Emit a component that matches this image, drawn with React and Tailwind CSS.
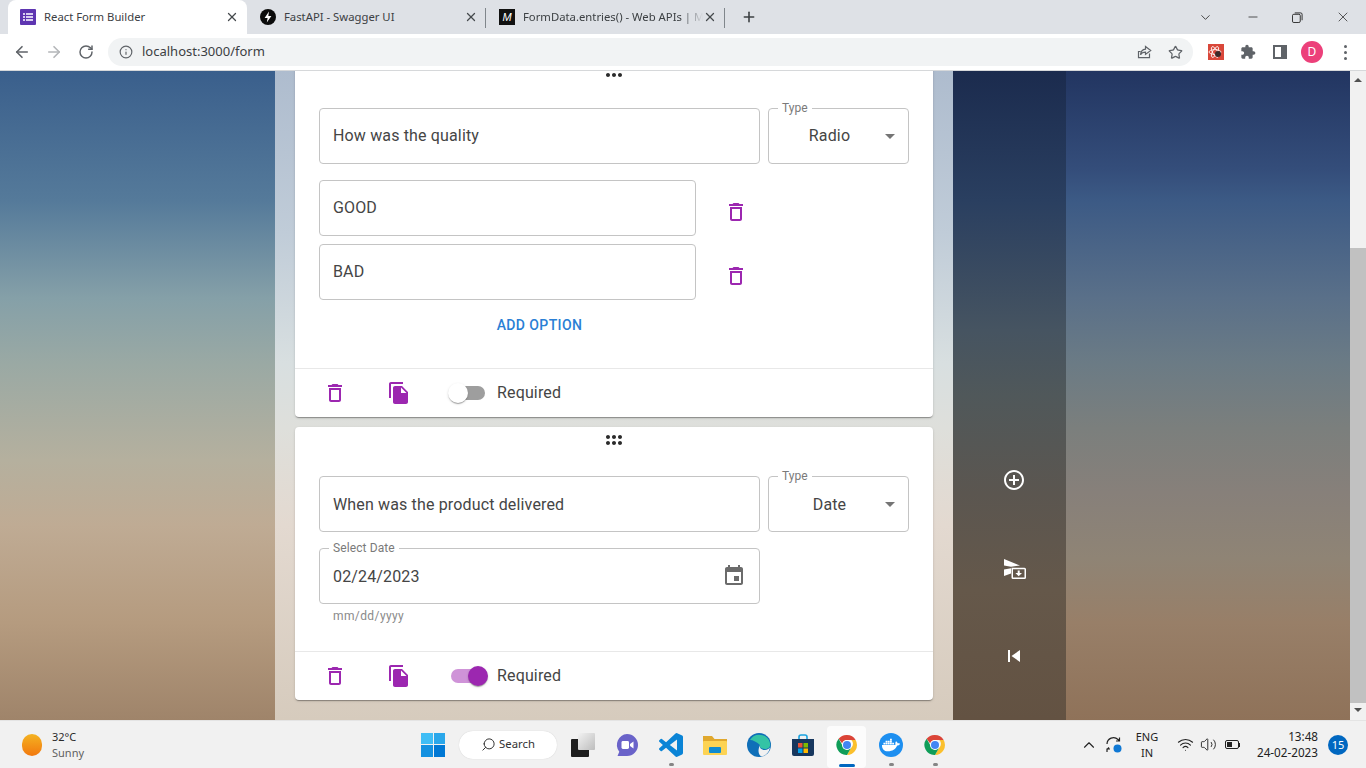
import React from 'react';
import { ArrowLeft, ArrowRight, RotateCw, Info, Star, Plus, X, ChevronDown, ChevronUp, Wifi, Volume2, Search, Minus } from 'lucide-react';
import { FaDocker } from 'react-icons/fa';

const trashPath = 'M6 19c0 1.1.9 2 2 2h8c1.1 0 2-.9 2-2V7H6v12zM8 9h8v10H8V9zm7.5-5l-1-1h-5l-1 1H5v2h14V4z';
const copyPath = 'M16 1H4c-1.1 0-2 .9-2 2v14h2V3h12V1zm-1 4l6 6v10c0 1.1-.9 2-2 2H7.99C6.89 23 6 22.1 6 21l.01-14c0-1.1.89-2 1.99-2h7zm-1 7h5.5L14 6.5V12z';
const dragPath = 'M11 18c0 1.1-.9 2-2 2s-2-.9-2-2 .9-2 2-2 2 .9 2 2zm-2-8c-1.1 0-2 .9-2 2s.9 2 2 2 2-.9 2-2-.9-2-2-2zm0-6c-1.1 0-2 .9-2 2s.9 2 2 2 2-.9 2-2-.9-2-2-2zm6 4c1.1 0 2-.9 2-2s-.9-2-2-2-2 .9-2 2 .9 2 2 2zm0 2c-1.1 0-2 .9-2 2s.9 2 2 2 2-.9 2-2-.9-2-2-2zm0 6c-1.1 0-2 .9-2 2s.9 2 2 2 2-.9 2-2-.9-2-2-2z';
const eventPath = 'M17 12h-5v5h5v-5zM16 1v2H8V1H6v2H5c-1.11 0-1.99.9-1.99 2L3 19c0 1.1.89 2 2 2h14c1.1 0 2-.9 2-2V5c0-1.1-.9-2-2-2h-1V1h-2zm3 18H5V8h14v11z';
const addCirclePath = 'M13 7h-2v4H7v2h4v4h2v-4h4v-2h-4V7zm-1-5C6.48 2 2 6.48 2 12s4.48 10 10 10 10-4.48 10-10S17.52 2 12 2zm0 18c-4.41 0-8-3.59-8-8s3.59-8 8-8 8 3.59 8 8-3.59 8-8 8z';
const skipPath = 'M6 6h2v12H6zm3.5 6l8.5 6V6z';
const puzzlePath = 'M20.5 11H19V7c0-1.1-.9-2-2-2h-4V3.5C13 2.12 11.88 1 10.5 1S8 2.12 8 3.5V5H4c-1.1 0-1.99.9-1.99 2v3.8H3.5c1.49 0 2.7 1.21 2.7 2.7s-1.21 2.7-2.7 2.7H2V20c0 1.1.9 2 2 2h3.8v-1.5c0-1.49 1.21-2.7 2.7-2.7 1.49 0 2.7 1.21 2.7 2.7V22H17c1.1 0 2-.9 2-2v-4h1.5c1.38 0 2.5-1.12 2.5-2.5S21.88 11 20.5 11z';
const vscodePath = 'M23.15 2.587L18.21.21a1.494 1.494 0 0 0-1.705.29l-9.46 8.63-4.12-3.128a.999.999 0 0 0-1.276.057L.327 7.261A1 1 0 0 0 .326 8.74L3.899 12 .326 15.26a1 1 0 0 0 .001 1.479L1.65 17.94a.999.999 0 0 0 1.276.057l4.12-3.128 9.46 8.63a1.492 1.492 0 0 0 1.704.29l4.942-2.377A1.5 1.5 0 0 0 24 20.06V3.939a1.5 1.5 0 0 0-.85-1.352zm-5.146 14.861L10.826 12l7.178-5.448v10.896z';

const Icon = ({ d, className }) => (
  <svg viewBox="0 0 24 24" fill="currentColor" className={className}><path d={d} /></svg>
);

const Tab = ({ icon, title, active, separator, fade }) => (
  <div className={`relative flex items-center h-[34px] w-[239px] pl-[12px] pr-[8px] ${active ? 'bg-white rounded-t-lg' : ''}`}>
    {icon}
    <span className={`ml-[8px] flex-1 overflow-hidden whitespace-nowrap text-[11.3px] text-[#3c4043] font-['Noto_Sans',sans-serif] ${fade ? '[mask-image:linear-gradient(90deg,#000_88%,transparent)]' : ''}`}>{title}</span>
    <X size={14} strokeWidth={2.2} className="shrink-0 text-[#45494d]" />
    {separator && <div className="absolute right-0 top-[8px] h-[20px] w-px bg-[#80868b]" />}
  </div>
);

const FormsFavicon = () => (
  <div className="w-4 h-4 shrink-0 rounded-[1px] bg-[#5e35b1] flex flex-col items-center justify-center gap-[1px]">
    {[0, 1, 2].map((row) => (
      <div key={row} className="flex gap-[1px]">
        <div className="w-[2px] h-[2px] bg-[#d9cff0]" />
        <div className="w-[7px] h-[2px] bg-[#d9cff0]" />
      </div>
    ))}
  </div>
);

const BrowserChrome = () => (
  <div className="shrink-0">
    <div className="flex items-center h-[34px] bg-[#dee1e6] pl-[8px]">
      <Tab active title="React Form Builder" icon={<FormsFavicon />} />
      <Tab
        separator
        title="FastAPI - Swagger UI"
        icon={
          <svg viewBox="0 0 16 16" className="ml-[1px] w-4 h-4 shrink-0">
            <circle cx="8" cy="8" r="8" fill="#0b0b0b" />
            <path d="M9 2.5 4.6 9h3l-.8 4.6L11.4 7H8.3z" fill="#fff" />
          </svg>
        }
      />
      <Tab
        separator
        fade
        title="FormData.entries() - Web APIs | MDN"
        icon={
          <div className="ml-[1px] w-4 h-4 shrink-0 bg-[#111] text-white text-[11px] italic leading-4 text-center font-['Liberation_Sans',sans-serif]">M</div>
        }
      />
      <Plus size={16} strokeWidth={2.4} className="ml-[16px] text-[#3c4043]" />
      <div className="flex-1" />
      <ChevronDown size={15} strokeWidth={1.3} className="text-[#222]" />
      <Minus size={14} strokeWidth={1.3} className="ml-[33px] text-[#222]" />
      <svg viewBox="0 0 12 12" className="ml-[32px] w-[11px] h-[11px] text-[#222]" fill="none" stroke="currentColor" strokeWidth="1">
        <rect x="0.5" y="2.5" width="8.5" height="9" rx="1.5" />
        <path d="M3 1h6.5A1.5 1.5 0 0 1 11 2.5V9" />
      </svg>
      <X size={16} strokeWidth={1.1} className="ml-[32px] mr-[15px] text-[#222]" />
    </div>
    <div className="flex items-center h-[36px] bg-white border-b border-[#d6d8da] box-content pl-[13px]">
      <ArrowLeft size={18} strokeWidth={2.2} className="text-[#5f6368]" />
      <ArrowRight size={18} strokeWidth={2.2} className="ml-[14px] text-[#b4b6b9]" />
      <RotateCw size={16} strokeWidth={2.2} className="ml-[15px] text-[#5f6368]" />
      <div className="ml-[14px] flex items-center w-[1085px] h-[28px] rounded-full bg-[#f1f3f4] pl-[11px]">
        <Info size={14} strokeWidth={2} className="text-[#5f6368]" />
        <span className="ml-[9px] text-[13px] text-[#3c4043] font-['Noto_Sans',sans-serif]">localhost:3000/form</span>
        <div className="flex-1" />
        <svg viewBox="0 0 16 16" className="w-4 h-4 text-[#5f6368]" fill="none" stroke="currentColor" strokeWidth="1.2">
          <path d="M13.5 9.5v4.2h-11V7.5h2.2" />
          <path d="M9.5 2.5 14.7 6.6 9.5 10.4V8.2c-2.4 0-4 .8-5 2.6.3-3.2 2-5.4 5-5.7z" />
        </svg>
        <Star size={15} strokeWidth={2} className="ml-[16px] mr-[10px] text-[#5f6368]" />
      </div>
      <svg viewBox="0 0 16 16" className="ml-[15px] w-4 h-4">
        <rect width="16" height="16" fill="#d9473a" />
        <g fill="none" stroke="#fff" strokeWidth=".8">
          <ellipse cx="7" cy="8" rx="6" ry="2.4" />
          <ellipse cx="7" cy="8" rx="6" ry="2.4" transform="rotate(60 7 8)" />
          <ellipse cx="7" cy="8" rx="6" ry="2.4" transform="rotate(120 7 8)" />
        </g>
        <circle cx="10" cy="10" r="3" fill="#3a2a2a" />
      </svg>
      <Icon d={puzzlePath} className="ml-[16px] w-4 h-4 text-[#5f6368]" />
      <div className="ml-[17px] w-[14px] h-[14px] border-[2px] border-r-[6px] border-[#5f6368]" />
      <div className="ml-[14px] w-[22px] h-[22px] rounded-full bg-[#ec407a] text-white text-[12px] leading-[22px] text-center font-['Noto_Sans',sans-serif]">D</div>
      <div className="ml-[21px] flex flex-col gap-[3px]">
        <div className="w-[3px] h-[3px] rounded-full bg-[#5f6368]" />
        <div className="w-[3px] h-[3px] rounded-full bg-[#5f6368]" />
        <div className="w-[3px] h-[3px] rounded-full bg-[#5f6368]" />
      </div>
    </div>
  </div>
);

const TextField = ({ value, label, width, nudge, children }) => (
  <div className={`relative flex items-center h-[56px] ${width} shrink-0 border border-[#c4c4c4] rounded px-[13px]`}>
    {label && <span className="absolute -top-[8px] left-[9px] bg-white px-[4px] text-[12px] leading-[14px] tracking-[0.1px] text-[#7a7a7a]">{label}</span>}
    <span className={`flex-1 text-[16px] tracking-[0.15px] text-[#454545] ${nudge ? 'pt-[2px]' : ''}`}>{value}</span>
    {children}
  </div>
);

const TypeSelect = ({ value, nudge }) => (
  <div className="relative flex items-center h-[56px] w-[141px] shrink-0 border border-[#c4c4c4] rounded">
    <span className="absolute -top-[8px] left-[9px] bg-white px-[4px] text-[12px] leading-[14px] text-[#7a7a7a]">Type</span>
    <span className={`flex-1 pl-[5px] text-center text-[16px] tracking-[0.15px] text-[#454545] ${nudge ? 'pt-[2px]' : ''}`}>{value}</span>
    <div className="mr-[13px] w-0 h-0 border-x-[5px] border-x-transparent border-t-[5px] border-t-[#757575]" />
  </div>
);

const Toggle = ({ on }) => (
  <div className={`relative w-[34px] h-[14px] rounded-full ${on ? 'bg-[#cf93d8]' : 'bg-[#9e9e9e]'}`}>
    <div className={`absolute -top-[3px] w-[20px] h-[20px] rounded-full shadow-[0_2px_1px_-1px_rgba(0,0,0,.2),0_1px_1px_0_rgba(0,0,0,.14),0_1px_3px_0_rgba(0,0,0,.12)] ${on ? 'left-[17px] bg-[#9c27b0]' : '-left-[3px] bg-white'}`} />
  </div>
);

const Card = ({ on, children }) => (
  <div className="shrink-0 bg-white rounded shadow-[0_2px_1px_-1px_rgba(0,0,0,.2),0_1px_1px_0_rgba(0,0,0,.14),0_1px_3px_0_rgba(0,0,0,.12)]">
    <div className="flex justify-center pt-[1px] h-[25px]">
      <Icon d={dragPath} className="w-6 h-6 rotate-90 text-[#2b2b2b]" />
    </div>
    <div className="px-[24px] pt-[24px]">{children}</div>
    <div className="flex items-center h-[49px] border-t border-[#e8e8e8] pl-[28px]">
      <Icon d={trashPath} className="w-6 h-6 text-[#9c27b0]" />
      <Icon d={copyPath} className="ml-[40px] w-6 h-6 text-[#9c27b0]" />
      <div className="ml-[40px]"><Toggle on={on} /></div>
      <span className="ml-[12px] text-[16px] tracking-[0.15px] text-[#454545]">Required</span>
    </div>
  </div>
);

const OptionRow = ({ value }) => (
  <div className="flex items-center">
    <TextField value={value} width="w-[377px]" />
    <Icon d={trashPath} className="ml-[28px] mt-[8px] w-6 h-6 text-[#9c27b0]" />
  </div>
);

const FormColumn = () => (
  <div className="w-[678px] shrink-0 flex flex-col justify-end gap-[10px] overflow-hidden px-[20px] pb-[20px] font-['Roboto',sans-serif] bg-[linear-gradient(180deg,#aebcce_0%,#c0ccd8_25%,#d8dfe0_45%,#dedfdb_55%,#e3d9d0_70%,#d6cbbd_100%)]">
    <Card on={false}>
      <div className="flex gap-[8px]">
        <TextField value="How was the quality" width="w-[441px]" />
        <TypeSelect value="Radio" />
      </div>
      <div className="mt-[16px] flex flex-col gap-[8px]">
        <OptionRow value="GOOD" />
        <OptionRow value="BAD" />
      </div>
      <div className="w-[441px] h-[68px] pt-[7px]">
        <div className="h-[36px] flex items-center justify-center text-[14px] font-medium uppercase tracking-[0.4px] text-[#2a7fd5]">Add Option</div>
      </div>
    </Card>
    <Card on>
      <div className="flex gap-[8px]">
        <TextField nudge value="When was the product delivered" width="w-[441px]" />
        <TypeSelect nudge value="Date" />
      </div>
      <div className="mt-[16px]">
        <TextField nudge value="02/24/2023" label="Select Date" width="w-[441px]">
          <Icon d={eventPath} className="w-6 h-6 text-[#6b6b6b]" />
        </TextField>
        <div className="mt-[4px] h-[43px] pl-[14px] text-[12px] leading-[16px] tracking-[0.4px] text-[#8a8a8a]">mm/dd/yyyy</div>
      </div>
    </Card>
  </div>
);

const ActionRail = () => (
  <div className="w-[113px] shrink-0 flex flex-col items-center justify-end pl-[9px] pb-[52px] text-white bg-[linear-gradient(180deg,#1b2b4e_0%,#2a3f60_20%,#465461_40%,#50585a_50%,#5b5650_65%,#65584a_80%,#635242_100%)]">
    <Icon d={addCirclePath} className="w-6 h-6" />
    <svg viewBox="0 0 24 24" className="mt-[66px] w-6 h-6" fill="currentColor">
      <path d="M2 1 18 7.5 9 8.8 2 7.5z" />
      <path d="M2 11.5 9 10.2v5.3L2 18z" />
      <path fillRule="evenodd" d="M9.5 9.8h13a1.5 1.5 0 0 1 1.5 1.5v8.2a1.5 1.5 0 0 1-1.5 1.5H11a1.5 1.5 0 0 1-1.5-1.5zM11 11.3v8.2h11.5v-8.2zM15.7 12.5h2v2.5h2.3l-3.3 3.2-3.3-3.2h2.3z" />
    </svg>
    <Icon d={skipPath} className="mt-[62px] w-6 h-6" />
  </div>
);

const Scrollbar = () => (
  <div className="w-[16px] shrink-0 bg-[#f1f1f1] flex flex-col items-center">
    <div className="mt-[7px] w-0 h-0 border-x-[4px] border-x-transparent border-b-[4px] border-b-[#505050]" />
    <div className="mt-[166px] w-full h-[455px] bg-[#c1c1c1]" />
    <div className="mt-[5px] w-0 h-0 border-x-[4px] border-x-transparent border-t-[4px] border-t-[#505050]" />
  </div>
);

const ChromeLogo = () => (
  <svg viewBox="0 0 48 48" className="w-6 h-6">
    <path d="M24 4a20 20 0 0 1 17.3 10H24a10 10 0 0 0-9.6 7.2L7.2 11.6A20 20 0 0 1 24 4z" fill="#db4437" />
    <path d="M41.3 14A20 20 0 0 1 24 44l8.6-15a10 10 0 0 0 0-15z" fill="#fbc02d" />
    <path d="M7.2 11.6 15.8 26.6A10 10 0 0 0 32.6 29L24 44A20 20 0 0 1 7.2 11.6z" fill="#0f9d58" />
    <circle cx="24" cy="24" r="10" fill="#fff" />
    <circle cx="24" cy="24" r="8" fill="#4285f4" />
  </svg>
);

const TaskIcon = ({ children, dot, active }) => (
  <div className="relative w-[44px] h-[48px] flex items-center justify-center">
    {active && <div className="absolute left-[2px] top-[5px] w-[39px] h-[42px] rounded bg-white/80" />}
    <div className="relative">{children}</div>
    {dot && <div className="absolute bottom-[3px] left-[20px] w-[5px] h-[3px] rounded-full bg-[#858585]" />}
    {active && <div className="absolute bottom-[2px] left-[14px] w-[16px] h-[3px] rounded-full bg-[#0067c0]" />}
  </div>
);

const Taskbar = () => (
  <div className="shrink-0 flex items-center h-[48px] bg-[#f1f1f1] border-t border-[#e4e4e4] box-border font-['Noto_Sans',sans-serif]">
    <div className="w-[411px] shrink-0 flex items-center pl-[22px]">
      <div className="w-[20px] h-[22px] rounded-full bg-[linear-gradient(180deg,#f4b322,#f2780e)]" />
      <div className="ml-[10px] text-[11px] leading-[16px]">
        <div className="text-[#2b2b2b]">32°C</div>
        <div className="text-[#5f5f5f]">Sunny</div>
      </div>
    </div>
    <TaskIcon>
      <div className="grid grid-cols-2 gap-[1px] w-[24px] h-[24px]">
        <div className="bg-[#3fbdf5]" />
        <div className="bg-[#2aa7ea]" />
        <div className="bg-[#1491e0]" />
        <div className="bg-[#0078d4]" />
      </div>
    </TaskIcon>
    <div className="ml-[4px] w-[98px] h-[28px] rounded-full bg-white shadow-[0_0_1px_rgba(0,0,0,.2)] flex items-center justify-center gap-[3px] text-[11.3px] text-[#333]">
      <Search size={15} strokeWidth={1.6} className="-scale-x-100" />
      Search
    </div>
    <div className="w-[4px]" />
    <TaskIcon>
      <div className="relative w-[24px] h-[24px]">
        <div className="absolute left-0 bottom-0 w-[18px] h-[18px] bg-[#1e1e1e] rounded-[1px]" />
        <div className="absolute right-0 top-0 w-[17px] h-[17px] bg-[linear-gradient(135deg,#f2f2f2,#bdbdbd)] rounded-[1px]" />
      </div>
    </TaskIcon>
    <TaskIcon>
      <svg viewBox="0 0 24 24" className="w-6 h-6">
        <path d="M12 1a11 11 0 0 1 0 22H2.5l1.8-4.2A11 11 0 0 1 12 1z" fill="#6a63c9" />
        <rect x="6.5" y="8" width="7.5" height="8" rx="1.4" fill="#fff" />
        <path d="M15 11l3.5-2.5v7L15 13z" fill="#fff" />
      </svg>
    </TaskIcon>
    <TaskIcon dot>
      <Icon d={vscodePath} className="w-6 h-6 text-[#0a84d6]" />
    </TaskIcon>
    <TaskIcon>
      <svg viewBox="0 0 24 24" className="w-6 h-6">
        <path d="M0 3h9l2.5 3H24v3H0z" fill="#e0a82e" />
        <rect y="8" width="24" height="14" rx="1" fill="#fcd354" />
        <rect x="6" y="14" width="12" height="6" rx="1" fill="#0f8bd1" />
      </svg>
    </TaskIcon>
    <TaskIcon>
      <svg viewBox="0 0 24 24" className="w-6 h-6">
        <circle cx="12" cy="12" r="12" fill="#0f6fb8" />
        <path d="M3 7a11 11 0 0 1 20 3c1 4-2 6-5 6s-6-1-5-4c-3-3-7-5-10-5z" fill="#34c3a5" />
        <path d="M13 12c-1 3 1.5 5 5 5 2 0 3.8-.9 5-2.5A12 12 0 0 1 15 23.6c-3-1-5-5-2-11.6z" fill="#f1f1f1" />
      </svg>
    </TaskIcon>
    <TaskIcon>
      <svg viewBox="0 0 24 24" className="w-6 h-6">
        <path d="M8 6V4a2 2 0 0 1 2-2h4a2 2 0 0 1 2 2v2" fill="none" stroke="#1aa3e0" strokeWidth="1.6" />
        <path d="M1 6h22v15a2 2 0 0 1-2 2H3a2 2 0 0 1-2-2z" fill="#17375e" />
        <rect x="7" y="10" width="4.5" height="4.5" fill="#e8533a" />
        <rect x="12.5" y="10" width="4.5" height="4.5" fill="#7fba00" />
        <rect x="7" y="15.5" width="4.5" height="4.5" fill="#00a4ef" />
        <rect x="12.5" y="15.5" width="4.5" height="4.5" fill="#ffb900" />
      </svg>
    </TaskIcon>
    <TaskIcon active><ChromeLogo /></TaskIcon>
    <TaskIcon dot>
      <div className="w-6 h-6 rounded-full bg-[#1d8ff0] flex items-center justify-center text-white">
        <FaDocker size={18} />
      </div>
    </TaskIcon>
    <TaskIcon dot><ChromeLogo /></TaskIcon>
    <ChevronUp size={18} strokeWidth={1.5} className="ml-[123px] text-[#222]" />
    <svg viewBox="0 0 20 20" className="ml-[6px] w-[20px] h-[20px]" fill="none" stroke="#222" strokeWidth="1.2">
      <path d="M3 9a6.5 6.5 0 0 1 11-4.5L15.5 6M15.5 2.5V6H12" />
      <path d="M3 14.5 5 12.5M3 17v-3h3" />
      <circle cx="13.5" cy="13.5" r="4" fill="#0f78d4" stroke="none" />
    </svg>
    <div className="ml-[9px] w-[28px] text-center text-[11px] leading-[16px] text-[#222]">
      <div>ENG</div>
      <div>IN</div>
    </div>
    <Wifi size={17} strokeWidth={1.5} className="ml-[16px] text-[#222]" />
    <Volume2 size={17} strokeWidth={1.3} className="ml-[6px] text-[#222]" />
    <div className="ml-[8px] flex items-center">
      <div className="w-[14px] h-[9px] border border-[#222] rounded-[2px] p-[1px]">
        <div className="w-[5px] h-full bg-[#222]" />
      </div>
      <div className="w-[1px] h-[4px] bg-[#222]" />
    </div>
    <div className="ml-[14px] w-[64px] text-right text-[11.7px] leading-[16px] pb-[1px] text-[#222]">
      <div>13:48</div>
      <div>24-02-2023</div>
    </div>
    <div className="ml-[10px] w-[20px] h-[20px] rounded-full bg-[#0067c0] text-white text-[11px] leading-[20px] text-center">15</div>
  </div>
);

const App = () => (
  <div className="h-screen flex flex-col overflow-hidden">
    <BrowserChrome />
    <div className="flex-1 min-h-0 flex">
      <div className="w-[275px] shrink-0 bg-[linear-gradient(180deg,#3a5f8c_0%,#557a9a_20%,#85a0a8_35%,#9aa9a4_45%,#b5b09e_60%,#bfab94_70%,#b59b7f_85%,#9f846a_100%)]" />
      <FormColumn />
      <ActionRail />
      <div className="w-[284px] shrink-0 bg-[linear-gradient(180deg,#223561_0%,#344d7a_15%,#3c5a85_20%,#5a7089_35%,#6b7b85_45%,#7b7f7d_55%,#87807a_65%,#8f8475_75%,#987f68_85%,#8f7259_100%)]" />
      <Scrollbar />
    </div>
    <Taskbar />
  </div>
);

export default App;
